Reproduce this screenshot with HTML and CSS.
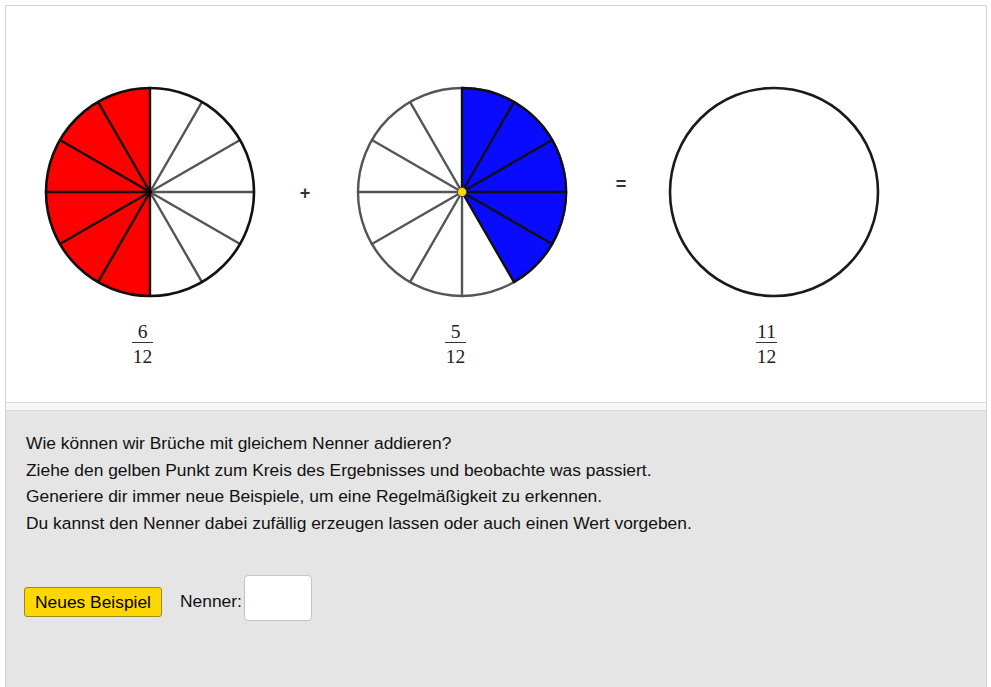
FILE: index.html
```html
<!DOCTYPE html>
<html lang="de">
<head>
<meta charset="utf-8">
<title>Brüche addieren</title>
<link rel="stylesheet" href="styles.css">
</head>
<body>
<div class="frame">
  <div class="applet">
    <svg class="canvas" width="980" height="396" viewBox="6 6 980 396" xmlns="http://www.w3.org/2000/svg">
      <!-- Circle 1: 6/12 red -->
      <circle cx="150" cy="192" r="104" fill="#ffffff" stroke="none"/>
      <path d="M150,192 L150,88 A104,104 0 0 0 150,296 Z" fill="#ff0000" stroke="none"/>
      <g stroke="#555555" stroke-width="2.4" stroke-linecap="round">
        <line x1="150" y1="192" x2="202" y2="282.07"/>
        <line x1="150" y1="192" x2="240.07" y2="244"/>
        <line x1="150" y1="192" x2="254" y2="192"/>
        <line x1="150" y1="192" x2="240.07" y2="140"/>
        <line x1="150" y1="192" x2="202" y2="101.93"/>
      </g>
      <g stroke="#111111" stroke-width="2.4" stroke-linecap="round">
        <line x1="150" y1="192" x2="98" y2="101.93"/>
        <line x1="150" y1="192" x2="59.93" y2="140"/>
        <line x1="150" y1="192" x2="46" y2="192"/>
        <line x1="150" y1="192" x2="59.93" y2="244"/>
        <line x1="150" y1="192" x2="98" y2="282.07"/>
        <line x1="150" y1="88" x2="150" y2="296"/>
      </g>
      <circle cx="150" cy="192" r="104" fill="none" stroke="#111111" stroke-width="2.6"/>
      <circle cx="150" cy="192" r="2" fill="#000"/>

      <!-- plus -->
      <text class="op" x="305" y="199" text-anchor="middle">+</text>

      <!-- Circle 2: 5/12 blue -->
      <circle cx="462" cy="192" r="104" fill="#ffffff" stroke="#555555" stroke-width="2.4"/>
      <g stroke="#555555" stroke-width="2.4" stroke-linecap="round">
        <line x1="462" y1="192" x2="410" y2="101.93"/>
        <line x1="462" y1="192" x2="371.93" y2="140"/>
        <line x1="462" y1="192" x2="358" y2="192"/>
        <line x1="462" y1="192" x2="371.93" y2="244"/>
        <line x1="462" y1="192" x2="410" y2="282.07"/>
        <line x1="462" y1="192" x2="462" y2="296"/>
      </g>
      <path d="M462,192 L462,88 A104,104 0 0 1 514,282.07 Z" fill="#0a0aff" stroke="#111111" stroke-width="2.4" stroke-linejoin="round"/>
      <g stroke="#111111" stroke-width="2.4" stroke-linecap="round">
        <line x1="462" y1="192" x2="514" y2="101.93"/>
        <line x1="462" y1="192" x2="552.07" y2="140"/>
        <line x1="462" y1="192" x2="566" y2="192"/>
        <line x1="462" y1="192" x2="552.07" y2="244"/>
      </g>
      <circle cx="462" cy="192" r="4.6" fill="#ffd700" stroke="#444" stroke-width="1"/>

      <!-- equals -->
      <text class="op" x="621" y="190" text-anchor="middle">=</text>

      <!-- Circle 3 -->
      <circle cx="774" cy="192" r="104" fill="#ffffff" stroke="#1a1a1a" stroke-width="2.6"/>

      <!-- fractions -->
      <g class="frac">
        <text x="142.5" y="338" text-anchor="middle">6</text>
        <line x1="132" y1="342.5" x2="153" y2="342.5"/>
        <text x="142.5" y="363" text-anchor="middle">12</text>
      </g>
      <g class="frac">
        <text x="455.5" y="338" text-anchor="middle">5</text>
        <line x1="445" y1="342.5" x2="466" y2="342.5"/>
        <text x="455.5" y="363" text-anchor="middle">12</text>
      </g>
      <g class="frac">
        <text x="766.5" y="338" text-anchor="middle">11</text>
        <line x1="756" y1="342.5" x2="777" y2="342.5"/>
        <text x="766.5" y="363" text-anchor="middle">12</text>
      </g>
    </svg>
  </div>
  <div class="strip"></div>
  <div class="panel">
    <div class="intro">
      <p>Wie können wir Brüche mit gleichem Nenner addieren?</p>
      <p>Ziehe den gelben Punkt zum Kreis des Ergebnisses und beobachte was passiert.</p>
      <p>Generiere dir immer neue Beispiele, um eine Regelmäßigkeit zu erkennen.</p>
      <p>Du kannst den Nenner dabei zufällig erzeugen lassen oder auch einen Wert vorgeben.</p>
    </div>
    <div class="controls">
      <button class="btn" type="button">Neues Beispiel</button>
      <label class="lbl" for="nenner">Nenner:</label>
      <input class="field" id="nenner" type="text">
    </div>
  </div>
</div>
</body>
</html>
```

FILE: styles.css
```css
html, body {
  margin: 0;
  padding: 0;
  background: #ffffff;
}

body {
  font-family: "Liberation Sans", Arial, sans-serif;
  color: #000000;
}

.frame {
  margin: 5px 0 0 5px;
  width: 980px;
  border: 1px solid #d3d3d3;
  border-bottom: none;
}

.applet {
  height: 396px;
  background: #ffffff;
  border-bottom: 1px solid #dcdcdc;
}

.canvas {
  display: block;
}

.op {
  font-family: "Liberation Sans", Arial, sans-serif;
  font-size: 18px;
  font-weight: bold;
  fill: #333333;
}

.frac text {
  font-family: "Liberation Serif", "Times New Roman", serif;
  font-size: 19.5px;
  fill: #222222;
}

.frac line {
  stroke: #333333;
  stroke-width: 1;
}

.strip {
  height: 7px;
  background: #f7f7f7;
  border-bottom: 1px solid #d8d8d8;
}

.panel {
  height: 280px;
  background: #e5e5e5;
  padding: 0;
}

.intro {
  padding: 19px 20px 0 20px;
  font-size: 17.4px;
  line-height: 26.5px;
  color: #111111;
}

.intro p {
  margin: 0;
}

.controls {
  display: flex;
  align-items: flex-start;
  margin-top: 39px;
  padding-left: 18px;
}

.btn {
  margin-top: 12px;
  width: 138px;
  height: 30px;
  padding: 0;
  background: #ffd700;
  border: 1px solid #9a8a26;
  border-radius: 3px;
  font-family: "Liberation Sans", Arial, sans-serif;
  font-size: 17.4px;
  color: #000000;
  margin-right: 18px;
}

.lbl {
  margin-top: 16px;
  font-size: 17.4px;
  line-height: 20px;
  margin-right: 2px;
  color: #111111;
}

.field {
  width: 68px;
  height: 46px;
  box-sizing: border-box;
  border: 1px solid #c4c4c4;
  border-radius: 4px;
  background: #ffffff;
  padding: 0;
}
```
